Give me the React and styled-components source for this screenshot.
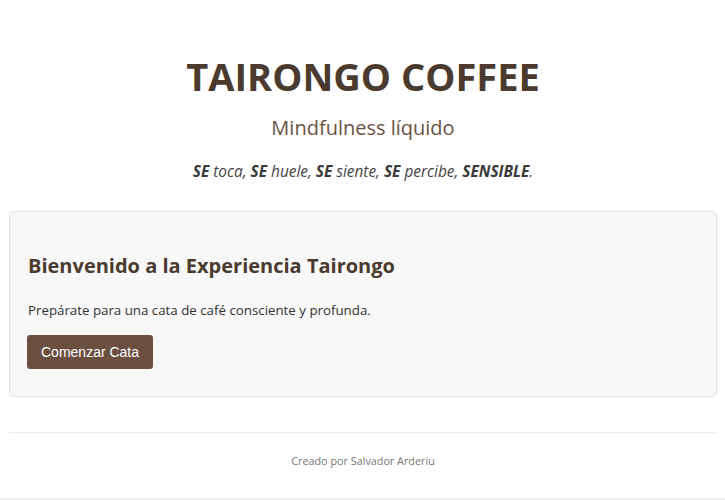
import React from "react";
import styled, { createGlobalStyle } from "styled-components";

const GlobalStyle = createGlobalStyle`
  body {
    margin: 0;
    background: #ffffff;
    font-family: "Open Sans", "Noto Sans", sans-serif;
    color: #333333;
  }
`;

const Page = styled.div`
  padding: 0 8px 0 9px;
`;

const Header = styled.header`
  text-align: center;
  padding: 48px 0 29px;
`;

const Title = styled.h1`
  margin: 0;
  font-size: 38px;
  line-height: 56px;
  font-weight: 700;
  color: #4b3a2e;
`;

const Subtitle = styled.p`
  margin: 10px 0 0;
  font-size: 20px;
  line-height: 28px;
  color: #6b5242;
`;

const Tagline = styled.p`
  margin: 20px 0 0;
  font-size: 15.4px;
  line-height: 20px;
  font-style: italic;
  color: #444444;

  strong {
    font-weight: 700;
    color: #3a3a3a;
  }
`;

const Card = styled.section`
  background: #f8f8f8;
  border: 1px solid #e3e3e3;
  border-radius: 5px;
  padding: 40px 18px 27px;
`;

const CardTitle = styled.h2`
  margin: 0;
  font-size: 20px;
  line-height: 28px;
  font-weight: 700;
  color: #4b3a2e;
`;

const Text = styled.p`
  margin: 20px 0 0;
  font-size: 13.3px;
  line-height: 20px;
  color: #333333;
`;

const Button = styled.button`
  margin-top: 15px;
  margin-left: -1px;
  background: #6b4f40;
  color: #ffffff;
  border: none;
  border-radius: 3px;
  padding: 0 14px;
  height: 34px;
  font-family: "Liberation Sans", Arial, sans-serif;
  font-size: 14px;
  cursor: pointer;
`;

const Footer = styled.footer`
  margin-top: 35px;
  border-top: 1px solid #eeeeee;
  padding: 20px 0 30px;
  text-align: center;
  font-size: 10.8px;
  color: #777777;
`;

const Band = styled.div`
  height: 12px;
  background: #eeeeee;
`;

export default function App() {
  return (
    <>
      <GlobalStyle />
      <Page>
        <Header>
          <Title>TAIRONGO COFFEE</Title>
          <Subtitle>Mindfulness líquido</Subtitle>
          <Tagline>
            <strong>SE</strong> toca, <strong>SE</strong> huele, <strong>SE</strong> siente,{" "}
            <strong>SE</strong> percibe, <strong>SENSIBLE</strong>.
          </Tagline>
        </Header>
        <Card>
          <CardTitle>Bienvenido a la Experiencia Tairongo</CardTitle>
          <Text>Prepárate para una cata de café consciente y profunda.</Text>
          <Button>Comenzar Cata</Button>
        </Card>
        <Footer>Creado por Salvador Arderiu</Footer>
      </Page>
      <Band />
    </>
  );
}
